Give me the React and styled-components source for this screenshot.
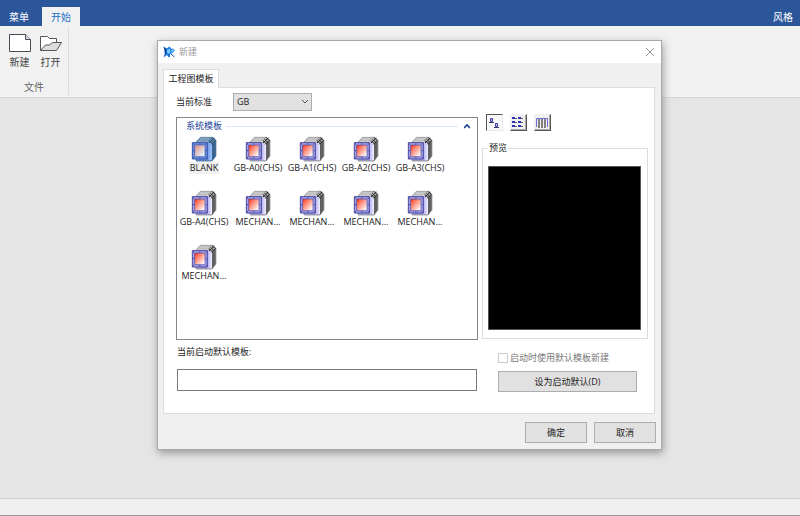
import React, { useState } from 'react'
import styled, { createGlobalStyle, css } from 'styled-components'

const TEMPLATES = [
  'BLANK',
  'GB-A0(CHS)',
  'GB-A1(CHS)',
  'GB-A2(CHS)',
  'GB-A3(CHS)',
  'GB-A4(CHS)',
  'MECHAN...',
  'MECHAN...',
  'MECHAN...',
  'MECHAN...',
  'MECHAN...',
]

const VIEWS = [
  { id: 'large', label: '大图标', Icon: LargeIcon },
  { id: 'list', label: '列表', Icon: ListIcon },
  { id: 'detail', label: '详细信息', Icon: DetailIcon },
]

export default function App() {
  const [selected, setSelected] = useState(0)
  const [view, setView] = useState('large')
  const [defaultTemplate, setDefaultTemplate] = useState('')

  return (
    <>
      <GlobalStyle />
      <Page>
        <TopBar>
          <MenuButton>菜单</MenuButton>
          <MenuButton $active>开始</MenuButton>
          <StyleButton>风格</StyleButton>
        </TopBar>
        <Ribbon>
          <RibbonGroup>
            <RibbonTools>
              <RibbonButton>
                <NewIcon />
                新建
              </RibbonButton>
              <RibbonButton>
                <OpenIcon />
                打开
              </RibbonButton>
            </RibbonTools>
            <GroupName>文件</GroupName>
          </RibbonGroup>
        </Ribbon>
        <Workspace />
        <StatusBar />
      </Page>

      <Overlay>
        <Dialog role="dialog" aria-labelledby="dialog-title">
          <TitleBar>
            <AppIcon />
            <Title id="dialog-title">新建</Title>
            <CloseButton aria-label="关闭">
              <svg width="10" height="10" viewBox="0 0 10 10">
                <path d="M1 1l8 8M9 1l-8 8" stroke="#999" fill="none" />
              </svg>
            </CloseButton>
          </TitleBar>
          <Tabs role="tablist">
            <Tab role="tab" aria-selected="true">
              工程图模板
            </Tab>
          </Tabs>
          <Panel role="tabpanel">
            <LeftColumn>
              <StandardRow>
                <StandardLabel htmlFor="standard">当前标准</StandardLabel>
                <SelectWrapper>
                  <Select id="standard" defaultValue="GB">
                    <option>GB</option>
                    <option>ISO</option>
                  </Select>
                  <svg width="8" height="6" viewBox="0 0 8 6">
                    <path d="M1 1l3 3 3-3" stroke="#555" fill="none" />
                  </svg>
                </SelectWrapper>
              </StandardRow>
              <TemplateBox>
                <BoxHeader>
                  <BoxTitle>系统模板</BoxTitle>
                  <BoxLine />
                  <svg width="6" height="5" viewBox="0 0 6 5">
                    <path d="M0 4l3-3 3 3" stroke="#1a4096" strokeWidth="1.7" fill="none" />
                  </svg>
                </BoxHeader>
                <TemplateGrid>
                  {TEMPLATES.map((name, i) => (
                    <Template key={i} onClick={() => setSelected(i)}>
                      <TemplateIcon selected={selected === i} />
                      <TemplateName $selected={selected === i}>{name}</TemplateName>
                    </Template>
                  ))}
                </TemplateGrid>
              </TemplateBox>
              <DefaultLabel htmlFor="default-template">当前启动默认模板:</DefaultLabel>
              <DefaultInput
                id="default-template"
                value={defaultTemplate}
                onChange={(e) => setDefaultTemplate(e.target.value)}
              />
            </LeftColumn>
            <RightColumn>
              <ViewButtons>
                {VIEWS.map(({ id, label, Icon }) => (
                  <ViewButton
                    key={id}
                    aria-label={label}
                    $active={view === id}
                    onClick={() => setView(id)}
                  >
                    <Icon />
                  </ViewButton>
                ))}
              </ViewButtons>
              <Preview>
                <legend>预览</legend>
                <PreviewScreen />
              </Preview>
              <DefaultActions>
                <CheckLabel>
                  <Checkbox type="checkbox" disabled />
                  启动时使用默认模板新建
                </CheckLabel>
                <Button onClick={() => setDefaultTemplate(TEMPLATES[selected])}>
                  设为启动默认(D)
                </Button>
              </DefaultActions>
            </RightColumn>
          </Panel>
          <Footer>
            <Button>确定</Button>
            <Button>取消</Button>
          </Footer>
        </Dialog>
      </Overlay>
    </>
  )
}

function NewIcon() {
  return (
    <svg width="24" height="20" viewBox="0 0 24 20">
      <path d="M1.500 1.500h16l5 5v12h-21z" fill="#fff" stroke="#4c4c58" />
      <path d="M17.500 1.500v5h5" fill="#d8d8dc" stroke="#4c4c58" />
    </svg>
  )
}

function OpenIcon() {
  return (
    <svg width="24" height="20" viewBox="0 0 24 20">
      <path d="M1.500 17.500v-14h7l2 2h7v4" fill="#fff" stroke="#55555d" />
      <path d="M1.500 17.500l5-5.500h4l3-2.500h9l-5 8z" fill="#dededf" stroke="#55555d" />
    </svg>
  )
}

function AppIcon() {
  return (
    <svg width="12" height="12" viewBox="0 0 24 24">
      <path d="M1 1l6 4 6-4 4 5-1 4 3 4-5 2-3 7-3-5-7 5 4-8-3-4 4-2z" fill="#1b7fe4" />
      <path d="M1 1l6 5 1 6-6 10 2-9z" fill="#083f9e" />
      <path d="M8 8l5-3 3 6-4 5-5-4z" fill="#6fcbff" />
      <path d="M15 15l8 7M12 16l1 6" stroke="#0a51b8" strokeWidth="2" fill="none" />
      <circle cx="19" cy="9" r="3" fill="#8fd2ff" stroke="#1b7fe4" strokeWidth="2" />
    </svg>
  )
}

function TemplateIcon({ selected }) {
  const c = selected
    ? {
        top: '#7295b5',
        light: '#8fabc6',
        side: '#36648f',
        edge: '#4a7096',
        clip: '#234a70',
        frame: '#6d8fe0',
        frameEdge: '#3757a8',
        mark: '#27479e',
      }
    : {
        top: '#bdbdbd',
        light: '#cfcfcf',
        side: '#606060',
        edge: '#8c8c94',
        clip: '#222',
        frame: '#a3a3ee',
        frameEdge: '#4a469c',
        mark: '#35317f',
      }
  return (
    <svg width="26" height="26" viewBox="0 0 78 78">
      <defs>
        <linearGradient id="face">
          <stop offset="0.650" stopColor="#a6a4ee" />
          <stop offset="1" stopColor="#f2f0ff" />
        </linearGradient>
        <linearGradient id="face-on">
          <stop offset="0.650" stopColor="#6a93e6" />
          <stop offset="1" stopColor="#a0c4fb" />
        </linearGradient>
        <linearGradient id="sheet" x1="0" y1="0" x2="1" y2="1">
          <stop offset="0" stopColor="#ff2a14" />
          <stop offset="0.300" stopColor="#ff7a64" />
          <stop offset="0.900" stopColor="#fff" />
        </linearGradient>
        <linearGradient id="sheet-on" x1="0" y1="0" x2="1" y2="1">
          <stop offset="0" stopColor="#dc8f80" />
          <stop offset="0.850" stopColor="#e6f0ff" />
        </linearGradient>
      </defs>
      <path d="M15 18L28 4h38l9 9v47L63 75H15z" fill={c.top} stroke={c.edge} strokeWidth="2" />
      <path d="M63 24l11-11v47L63 75z" fill={c.side} />
      <path d="M17 20h46v54H17z" fill={selected ? 'url(#face-on)' : 'url(#face)'} />
      <path d="M20 16h32M27 9h27" stroke={c.light} strokeWidth="3" />
      <path
        d="M53 13l12 11M58 9l11 11M63 4l10 10M54 21L70 6M61 25l12-12"
        stroke={c.clip}
        strokeWidth="3"
      />
      <path d="M17 74h46" stroke={c.edge} strokeWidth="2" />
      <path d="M4 20h45v49H4z" fill={c.frame} stroke={c.frameEdge} strokeWidth="3" />
      <path
        d="M11 27h31v35H11z"
        fill={selected ? 'url(#sheet-on)' : 'url(#sheet)'}
        stroke={c.frameEdge}
        strokeWidth="2"
      />
      <path
        d="M6 24h3M25 24h3M44 24h3M6 65h3M25 65h3M44 65h3M6 44h3M44 44h3"
        stroke={c.mark}
        strokeWidth="3"
      />
    </svg>
  )
}

function LargeIcon() {
  return (
    <svg width="15" height="15" viewBox="0 0 15 15">
      <path d="M3.500 3.500h2v3h-2zM8.500 8.500h2v3h-2z" fill="#c9c9f4" stroke="#3a3aa6" />
      <path d="M2 7.500h5M7 12.500h5" stroke="#3c3c70" />
    </svg>
  )
}

function ListIcon() {
  return (
    <svg width="15" height="15" viewBox="0 0 15 15">
      <path d="M1 3h3M7 3h3M1 7h3M7 7h3M1 11h3M7 11h3" stroke="#3030b5" strokeWidth="2" />
      <path d="M4 3.500h2M10 3.500h2M4 7.500h2M10 7.500h2M4 11.500h2M10 11.500h2" stroke="#666" />
    </svg>
  )
}

function DetailIcon() {
  return (
    <svg width="15" height="15" viewBox="0 0 15 15">
      <path d="M4 4v9M7 4v9M10 4v9" stroke="#808080" strokeWidth="2" />
      <path d="M1.500 12V3.500h11V12" stroke="#6d6dd0" fill="none" />
    </svg>
  )
}

const GlobalStyle = createGlobalStyle`
  * {
    box-sizing: border-box;
  }

  body {
    margin: 0;
    font-family: 'Open Sans', 'Noto Sans CJK SC', sans-serif;
    font-size: 9px;
    line-height: 12px;
    color: #1c1c1c;
  }

  button,
  input,
  select {
    margin: 0;
    padding: 0;
    font: inherit;
    color: inherit;
  }

  svg {
    display: block;
    flex: none;
  }
`

const Page = styled.div`
  display: flex;
  flex-direction: column;
  min-height: 100vh;
  background: #e5e5e5;
`

const TopBar = styled.header`
  display: flex;
  align-items: flex-end;
  height: 26px;
  padding: 0 7px 0 0;
  background: #2b579a;
`

const MenuButton = styled.button`
  width: 38px;
  height: 19px;
  border: 0;
  background: none;
  font-size: 10px;
  color: #fff;

  ${({ $active }) =>
    $active &&
    css`
      margin-left: 4px;
      background: #f1f1f1;
      color: #1c6fcb;
    `}
`

const StyleButton = styled(MenuButton)`
  width: 20px;
  margin-left: auto;
`

const Ribbon = styled.div`
  display: flex;
  height: 72px;
  padding: 2px 0;
  border-bottom: 1px solid #d5d5d5;
  background: #f1f1f1;
`

const RibbonGroup = styled.section`
  width: 69px;
  padding-top: 5px;
  border-right: 1px solid #dcdcdc;
`

const RibbonTools = styled.div`
  display: flex;
  padding-left: 4px;
`

const RibbonButton = styled.button`
  display: flex;
  flex-direction: column;
  align-items: center;
  gap: 3px;
  width: 31px;
  border: 0;
  background: none;
  font-size: 10px;
  color: #444;
`

const GroupName = styled.div`
  margin-top: 13px;
  font-size: 10px;
  text-align: center;
  color: #666;
`

const Workspace = styled.main`
  flex: 1;
`

const StatusBar = styled.footer`
  height: 18px;
  border-top: 1px solid #d3d3d3;
  border-bottom: 1px solid #999;
  background: #f0f0f0;
`

const Overlay = styled.div`
  position: absolute;
  inset: 0;
  display: flex;
  justify-content: center;
  align-items: flex-start;
  padding: 40px 0 0 19px;
`

const Dialog = styled.section`
  width: 505px;
  border: 1px solid #a8a8a8;
  background: #f0f0f0;
  box-shadow: 1px 3px 8px rgba(0, 0, 0, 0.35);
`

const TitleBar = styled.header`
  display: flex;
  align-items: center;
  gap: 4px;
  height: 22px;
  padding: 0 6px 0 5px;
  background: #fff;
`

const Title = styled.h1`
  margin: 0;
  font-size: 9px;
  font-weight: 400;
  color: #999;
`

const CloseButton = styled.button`
  margin-left: auto;
  border: 0;
  background: none;
`

const Tabs = styled.div`
  display: flex;
  padding: 6px 5px 0;
`

const Tab = styled.button`
  height: 19px;
  width: 56px;
  margin-bottom: -1px;
  border: 1px solid #dcdcdc;
  border-bottom: 0;
  background: #fff;
  white-space: nowrap;
`

const Panel = styled.div`
  display: grid;
  grid-template-columns: 1fr 166px;
  gap: 4px;
  margin: 0 6px 0 5px;
  padding: 5px 6px 21px 12px;
  border: 1px solid #dcdcdc;
  background: #fff;
`

const LeftColumn = styled.div`
  display: flex;
  flex-direction: column;
`

const StandardRow = styled.div`
  display: flex;
  align-items: center;
`

const StandardLabel = styled.label`
  width: 57px;
`

const SelectWrapper = styled.div`
  display: grid;
  align-items: center;
  width: 79px;

  > * {
    grid-area: 1 / 1;
  }

  svg {
    justify-self: end;
    margin-right: 3px;
    pointer-events: none;
  }
`

const Select = styled.select`
  height: 18px;
  padding: 0 3px;
  border: 1px solid #adadad;
  border-radius: 0;
  background: #e1e1e1;
  appearance: none;
`

const TemplateBox = styled.div`
  height: 223px;
  margin-top: 6px;
  border: 1px solid #828790;
  overflow: auto;
`

const BoxHeader = styled.div`
  display: flex;
  align-items: center;
  gap: 4px;
  padding: 2px 7px 0 9px;
`

const BoxTitle = styled.span`
  color: #1a3f9c;
`

const BoxLine = styled.span`
  flex: 1;
  height: 1px;
  margin-right: 2px;
  background: #d9e4f4;
`

const TemplateGrid = styled.div`
  display: grid;
  grid-template-columns: repeat(5, 54px);
  grid-auto-rows: 54px;
  padding-top: 4px;
`

const Template = styled.button`
  display: flex;
  flex-direction: column;
  align-items: center;
  border: 0;
  background: none;
`

const TemplateName = styled.span`
  padding: 0 1px;
  white-space: nowrap;
  background: ${({ $selected }) => ($selected ? '#f0f0f0' : 'none')};
`

const DefaultLabel = styled.label`
  margin: 6px 0 11px 1px;
`

const DefaultInput = styled.input`
  height: 22px;
  margin: 0 1px;
  padding: 0 4px;
  border: 1px solid #7a7a7a;
  background: #fff;
`

const RightColumn = styled.div`
  display: flex;
  flex-direction: column;
  padding-top: 21px;
`

const ViewButtons = styled.div`
  display: flex;
  gap: 7px;
  padding-left: 4px;
`

const ViewButton = styled.button`
  width: 17px;
  height: 17px;
  border: 1px solid;
  border-color: ${({ $active }) => ($active ? '#555 #e8e8e8 #e8e8e8 #555' : '#eee #555 #555 #eee')};
  box-shadow: ${({ $active }) => ($active ? 'none' : 'inset -1px -1px #aaa')};
  background: ${({ $active }) => ($active ? '#f8f8f8' : '#f0f0f0')};
`

const Preview = styled.fieldset`
  margin: 11px 0 0;
  padding: 12px 6px 8px 5px;
  border: 1px solid #dcdcdc;

  legend {
    padding: 0 1px;
  }
`

const PreviewScreen = styled.div`
  height: 164px;
  border: 1px solid #555;
  background: #000;
`

const DefaultActions = styled.div`
  display: flex;
  flex-direction: column;
  gap: 7px;
  padding: 13px 11px 0 16px;
`

const CheckLabel = styled.label`
  display: flex;
  align-items: center;
  gap: 2px;
  white-space: nowrap;
  color: #777;
`

const Checkbox = styled.input`
  width: 10px;
  height: 10px;
  border: 1px solid #ccc;
  background: #fff;
  appearance: none;
`

const Button = styled.button`
  height: 21px;
  min-width: 62px;
  border: 1px solid #adadad;
  background: #e1e1e1;
`

const Footer = styled.footer`
  display: flex;
  justify-content: flex-end;
  gap: 7px;
  padding: 8px 5px 6px;
`
